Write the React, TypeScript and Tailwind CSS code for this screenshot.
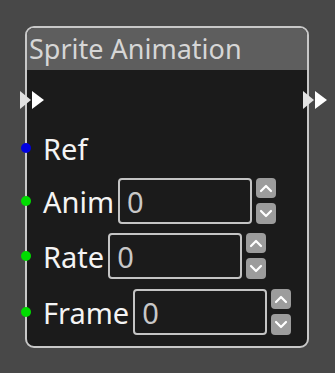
import React from "react";

const font = { fontFamily: '"Noto Sans", "Open Sans", sans-serif' };

function Flow() {
  return (
    <svg width="25" height="20" viewBox="0 0 25 20">
      <polygon points="0,1 11,10 0,19" fill="#e2e2e2" />
      <polygon points="12,1 24,10 12,19" fill="#ffffff" />
    </svg>
  );
}

function Spinner() {
  return (
    <div className="ml-[4px] flex flex-col gap-[5px]">
      <div className="flex h-[20px] w-[20px] items-center justify-center rounded-[4px] bg-[#9c9c9c]">
        <svg width="14" height="10" viewBox="0 0 14 10">
          <polyline points="2,8 7,3 12,8" fill="none" stroke="#ffffff" strokeWidth="2.2" strokeLinecap="round" strokeLinejoin="round" />
        </svg>
      </div>
      <div className="flex h-[21px] w-[20px] items-center justify-center rounded-[4px] bg-[#9c9c9c]">
        <svg width="14" height="10" viewBox="0 0 14 10">
          <polyline points="2,2 7,7 12,2" fill="none" stroke="#ffffff" strokeWidth="2.2" strokeLinecap="round" strokeLinejoin="round" />
        </svg>
      </div>
    </div>
  );
}

function Row({ label, color, input, className }: { label: string; color: string; input?: boolean; className?: string }) {
  return (
    <div className={"relative flex items-center pl-[16px] " + (className ?? "")}>
      <div className="absolute left-[-6px] top-1/2 h-[10px] w-[10px] -translate-y-1/2 rounded-full" style={{ backgroundColor: color }} />
      <span className="text-[29px] leading-none text-[#f4f4f4]">{label}</span>
      {input && (
        <>
          <div className="ml-[4px] flex h-[46px] w-[134px] items-center rounded-[4px] border-2 border-[#c4c4c4] pl-[7px] text-[29px] leading-none text-[#c8c8c8]">
            0
          </div>
          <Spinner />
        </>
      )}
    </div>
  );
}

export default function App() {
  return (
    <div className="h-[373px] w-[335px] overflow-hidden bg-[#484848] pl-[25px] pt-[26px]" style={font}>
      <div className="flex h-[322px] w-[284px] flex-col rounded-[9px] border-2 border-[#c8c8c8] bg-[#1b1b1b]">
        <div className="flex h-[42px] items-center rounded-t-[7px] bg-[#5e5e5e] pl-[2px] pb-[1px] text-[27px] leading-none text-[#d6d6d6]">
          Sprite Animation
        </div>
        <div className="relative flex h-[60px] items-center justify-between">
          <div className="ml-[-7px]">
            <Flow />
          </div>
          <div className="mr-[-21px]">
            <Flow />
          </div>
        </div>
        <Row label="Ref" color="#0000e0" className="h-[36px]" />
        <Row label="Anim" color="#00dd00" input className="mt-[12px]" />
        <Row label="Rate" color="#00dd00" input className="mt-[9px]" />
        <Row label="Frame" color="#00dd00" input className="mt-[10px]" />
      </div>
    </div>
  );
}
